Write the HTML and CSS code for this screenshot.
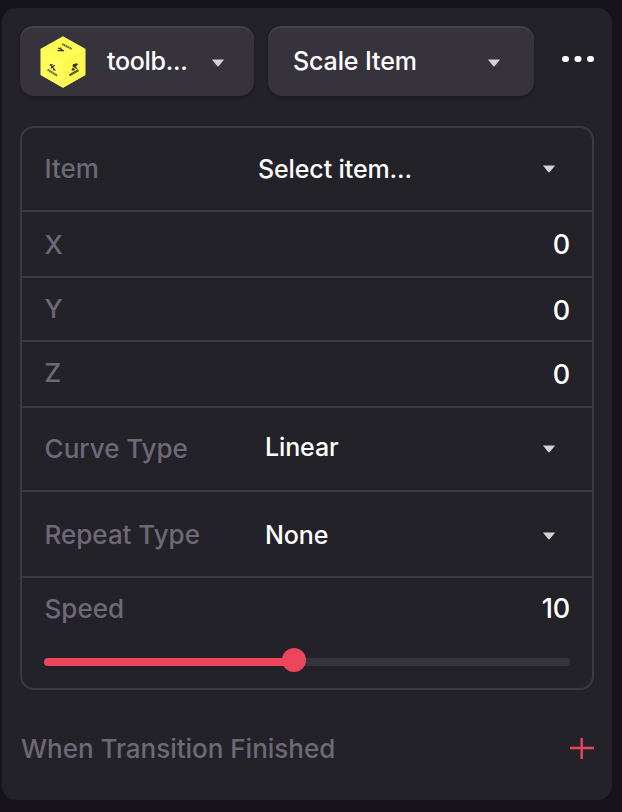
FILE: index.html
```html
<!DOCTYPE html>
<html lang="en">
<head>
<meta charset="utf-8">
<title>Scale Item</title>
<link rel="stylesheet" href="styles.css">
</head>
<body>
<main class="panel">
  <header class="toolbar">
    <button class="picker picker-item">
      <svg class="cube" viewBox="0 0 46 52">
        <path d="M23 .2 45.3 12.7V39L23 51.8.7 39V12.7Z" fill="#fdfc54"/>
        <path d="M23 25 .7 12.7V39L23 51.8Z" fill="#fffd5c"/>
        <path d="M23 25 45.3 12.7V39L23 51.8Z" fill="#fbf950"/>
        <g fill="none" stroke="#34331b" stroke-width="1.1">
          <path d="M17.5 14.7h6.5M20.6 11.5l.4 3.5M18 12l4.5 1.8" stroke-width="1.3"/>
          <path d="M10 28l5 6.3M14.8 29.2l-4 3M9.8 29.6l3-1M13 33.6l2.6.6"/>
          <path d="M32 33.8l5.5-6M32.6 29.6l4.6 3.2M33 29l4-1M31.8 33.8h2.8" stroke-width="1.4"/>
          <path d="M22.2 8l9.6 5" stroke-width="1.9" stroke-dasharray="1.6 .4" opacity=".8"/>
          <path d="M7.6 33.6l9.4 6" stroke-width="2.1" stroke-dasharray="1.6 .4" opacity=".75"/>
          <path d="M29.5 39.3l9-5.2" stroke-width="2.2" stroke-dasharray="1.7 .2" opacity=".9"/>
        </g>
      </svg>
      <span class="value">toolb...</span>
      <svg class="caret" viewBox="0 0 14 8"><path d="M.9.5h12.2L7.8 7q-.8.8-1.6 0Z"/></svg>
    </button>
    <button class="picker picker-action">
      <span class="value">Scale Item</span>
      <svg class="caret" viewBox="0 0 14 8"><path d="M.9.5h12.2L7.8 7q-.8.8-1.6 0Z"/></svg>
    </button>
    <svg class="more" viewBox="0 0 34 8"><rect x="1" y="1" width="7" height="6" rx="3"/><rect x="13.5" y="1" width="7" height="6" rx="3"/><rect x="26" y="1" width="7" height="6" rx="3"/></svg>
  </header>

  <section class="card">
    <div class="row select-row item-row">
      <span class="label">Item</span><span class="value">Select item...</span>
      <svg class="caret" viewBox="0 0 14 8"><path d="M.9.5h12.2L7.8 7q-.8.8-1.6 0Z"/></svg>
    </div>
    <div class="row x-row"><span class="label">X</span><span class="number">0</span></div>
    <div class="row y-row"><span class="label">Y</span><span class="number">0</span></div>
    <div class="row z-row"><span class="label">Z</span><span class="number">0</span></div>
    <div class="row select-row curve-row">
      <span class="label">Curve Type</span><span class="value">Linear</span>
      <svg class="caret" viewBox="0 0 14 8"><path d="M.9.5h12.2L7.8 7q-.8.8-1.6 0Z"/></svg>
    </div>
    <div class="row select-row repeat-row">
      <span class="label">Repeat Type</span><span class="value">None</span>
      <svg class="caret" viewBox="0 0 14 8"><path d="M.9.5h12.2L7.8 7q-.8.8-1.6 0Z"/></svg>
    </div>
    <div class="speed">
      <div class="speed-head"><span class="label">Speed</span><span class="number">10</span></div>
      <div class="track"><div class="fill"><span class="thumb"></span></div></div>
    </div>
  </section>

  <footer class="next">
    <span class="label">When Transition Finished</span>
    <svg class="plus" viewBox="0 0 24 22"><path d="M0 10h24M11.7 0v21" /></svg>
  </footer>
</main>
</body>
</html>
```

FILE: styles.css
```css
* { box-sizing: border-box; }

body {
  margin: 0;
  height: 812px;
  padding: 8px 10px 12px 2px;
  background: #16131a;
  font-family: Inter, "Liberation Sans", sans-serif;
}

.panel {
  height: 792px;
  padding: 18px;
  border-radius: 14px;
  background: #232228;
}

.toolbar { display: flex; align-items: flex-start; }

.picker {
  display: flex;
  flex: none;
  align-items: center;
  height: 70px;
  margin: 0 14px 0 0;
  padding: 0;
  border: 0;
  border-radius: 14px;
  background: #37333d;
  box-shadow: inset 0 2px 0 #434046, 0 2px 3px #1b1a1f;
  font-family: inherit;
}

.picker-item { width: 234px; padding: 2px 29px 0 20px; }
.picker-action { width: 266px; padding: 2px 33px 0 25px; }
.picker .value { flex: 1; text-align: left; padding-bottom: 2px; }
.picker-item .value { letter-spacing: -.3px; }
.picker .caret { margin-top: 1px; }

.cube { width: 46px; height: 52px; margin-right: 21px; }

.value {
  font-size: 25px;
  line-height: 30px;
  font-weight: 500;
  letter-spacing: -.12px;
  color: #fff;
  white-space: nowrap;
}

.label {
  padding-left: .6px;
  font-size: 26px;
  line-height: 32px;
  font-weight: 450;
  letter-spacing: -.02px;
  color: #6e6977;
  white-space: nowrap;
}

.number {
  font-size: 27px;
  line-height: 32px;
  font-weight: 480;
  letter-spacing: -.2px;
  color: #fff;
}

.caret { width: 14px; height: 8px; flex: none; fill: #d3d2d4; }

.more { flex: none; width: 34px; height: 8px; margin: 29px -1px 0 13px; fill: #fff; }

.card {
  height: 564px;
  margin-top: 30px;
  border: 2px solid #3c3a41;
  border-radius: 14px;
}

.row {
  display: flex;
  align-items: center;
  justify-content: space-between;
  padding: 0 22px;
  border-bottom: 2px solid #3c3a41;
}

.select-row {
  display: grid;
  grid-template-columns: 221px 1fr 14px;
  padding-right: 36px;
}

.item-row { height: 84px; grid-template-columns: 214px 1fr 14px; }
.x-row { height: 66px; padding-top: 1px; }
.y-row { height: 64px; }
.z-row { height: 66px; }
.curve-row { height: 84px; }
.repeat-row { height: 86px; padding-top: 2px; }
.repeat-row .caret { margin-top: 2px; }
.x-row .number { padding-top: 1px; }
.y-row .number { padding-top: 4px; }
.z-row .number { padding-top: 2px; }
.z-row .label { padding-bottom: 3px; }
.curve-row .value { padding-bottom: 4px; }

.speed { padding: 15px 22px 0; }
.speed-head { display: flex; justify-content: space-between; }

.track {
  height: 8px;
  margin-top: 33px;
  border-radius: 4px;
  background: #37353b;
}

.fill {
  position: relative;
  width: 249.5px;
  height: 8px;
  border-radius: 4px;
  background: #ed455c;
}

.thumb {
  position: absolute;
  top: -10px;
  right: -12px;
  width: 24px;
  height: 24px;
  border-radius: 50%;
  background: #ed455c;
}

.next {
  display: flex;
  align-items: center;
  justify-content: space-between;
  height: 32px;
  margin-top: 43px;
}

.next .label { padding-left: 1px; }

.plus { width: 24px; height: 22px; fill: none; stroke: #ed455c; stroke-width: 2.4; }
```
